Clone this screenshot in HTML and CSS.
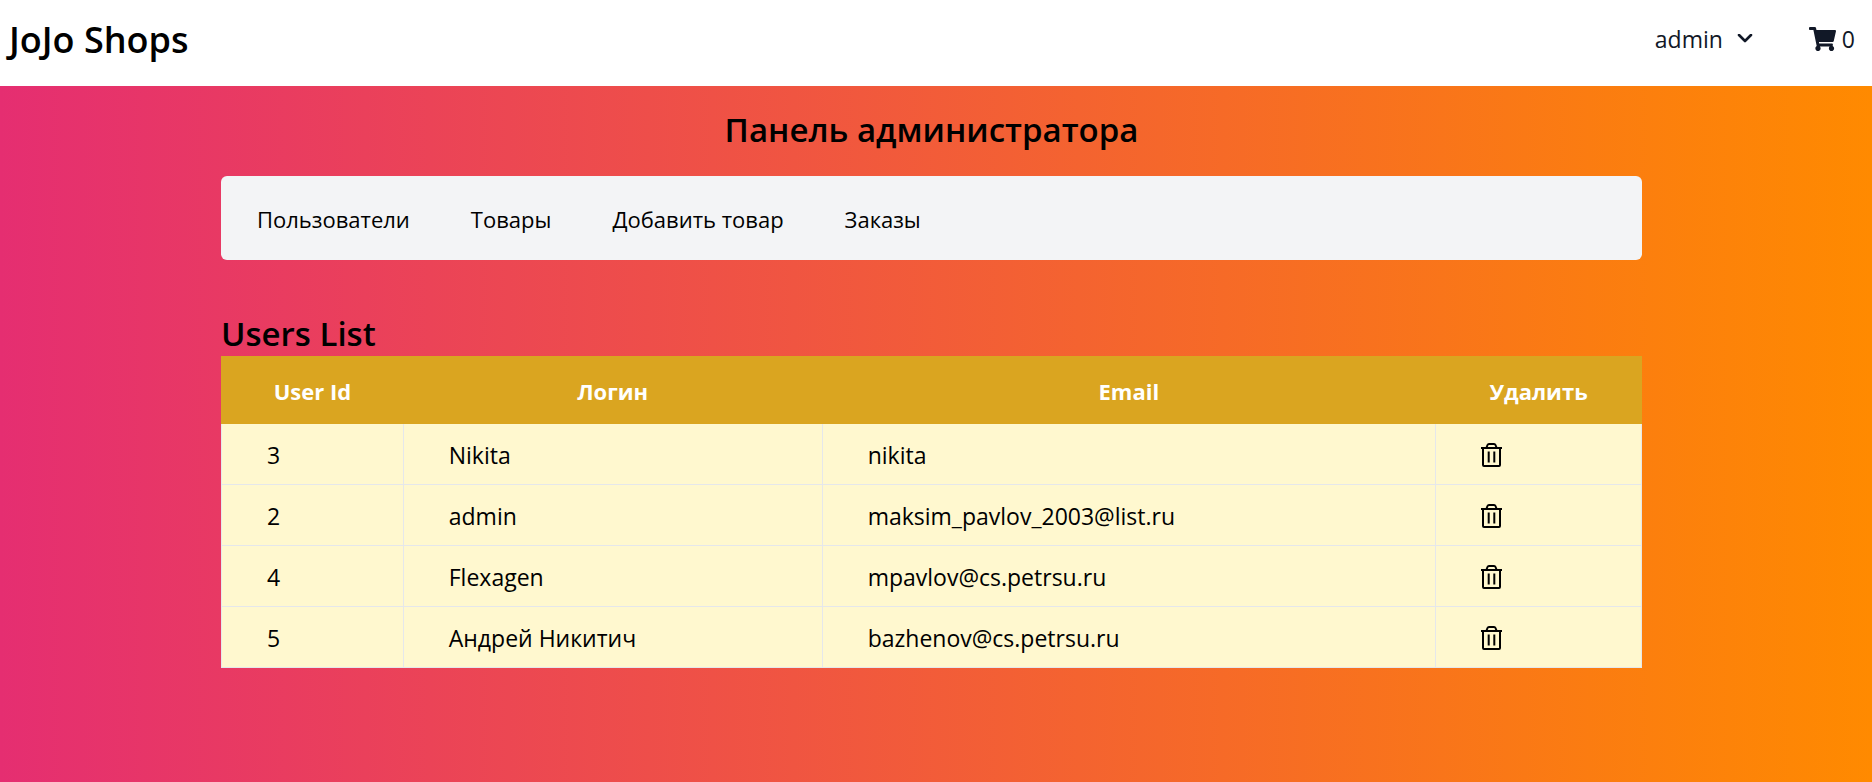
FILE: index.html
```html
<!DOCTYPE html>
<html lang="ru">
<head>
<meta charset="utf-8">
<meta name="viewport" content="width=device-width, initial-scale=1">
<title>JoJo Shops</title>
<link rel="stylesheet" href="styles.css">
</head>
<body>
<svg class="sprite" aria-hidden="true">
  <symbol id="trash" viewBox="0 0 21 24">
    <path d="M0 5h21M2 5.500V22q0 1 1 1h15q1 0 1-1V5.500M5.500 4.500l1-2.500q.4-1 1.500-1h5q1.100 0 1.500 1l1 2.500M7.700 8.500v11M13.300 8.500v11" fill="none" stroke="currentColor" stroke-width="2"/>
  </symbol>
</svg>
<header class="header">
  <a class="brand" href="#">JoJo Shops</a>
  <div class="actions">
    <button class="user" type="button">admin
      <svg class="chevron" viewBox="0 0 16 10" aria-hidden="true"><path d="M2 1l6 6 6-6" fill="none" stroke="currentColor" stroke-width="2.600" stroke-linecap="round" stroke-linejoin="round"/></svg>
    </button>
    <a class="cart" href="#" aria-label="Корзина">
      <svg class="cart-icon" viewBox="0 0 576 512" aria-hidden="true"><path fill="currentColor" d="M528.120 301.319l47.273-208C578.806 78.301 567.391 64 551.990 64H159.208l-9.166-44.810C147.758 8.021 137.930 0 126.529 0H24C10.745 0 0 10.745 0 24v16c0 13.255 10.745 24 24 24h69.883l70.248 343.435C147.325 417.100 136 435.222 136 456c0 30.928 25.072 56 56 56s56-25.072 56-56c0-15.674-6.447-29.835-16.824-40h209.647C430.447 426.165 424 440.326 424 456c0 30.928 25.072 56 56 56s56-25.072 56-56c0-22.172-12.888-41.332-31.579-50.405l5.517-24.276c3.413-15.018-8.002-29.319-23.403-29.319H218.117l-6.545-32h293.145c11.206 0 20.920-7.754 23.403-18.681z"/></svg>
      <span>0</span>
    </a>
  </div>
</header>
<main class="main">
  <div class="container">
    <h1 class="title">Панель администратора</h1>
    <nav class="tabs">
      <a href="#">Пользователи</a>
      <a href="#">Товары</a>
      <a href="#">Добавить товар</a>
      <a href="#">Заказы</a>
    </nav>
    <h2 class="subtitle">Users List</h2>
    <table class="users">
      <thead>
        <tr><th class="col-id">User Id</th><th class="col-login">Логин</th><th class="col-email">Email</th><th class="col-delete">Удалить</th></tr>
      </thead>
      <tbody>
        <tr><td>3</td><td>Nikita</td><td>nikita</td><td><button class="delete" type="button" aria-label="Удалить"><svg><use href="#trash"/></svg></button></td></tr>
        <tr><td>2</td><td>admin</td><td>maksim_pavlov_2003@list.ru</td><td><button class="delete" type="button" aria-label="Удалить"><svg><use href="#trash"/></svg></button></td></tr>
        <tr><td>4</td><td>Flexagen</td><td>mpavlov@cs.petrsu.ru</td><td><button class="delete" type="button" aria-label="Удалить"><svg><use href="#trash"/></svg></button></td></tr>
        <tr><td>5</td><td>Андрей Никитич</td><td>bazhenov@cs.petrsu.ru</td><td><button class="delete" type="button" aria-label="Удалить"><svg><use href="#trash"/></svg></button></td></tr>
      </tbody>
    </table>
  </div>
</main>
</body>
</html>
```
FILE: styles.css
```css
* { box-sizing: border-box; }
body {
  margin: 0;
  min-height: 100vh;
  display: flex;
  flex-direction: column;
  font-family: "Open Sans", "Noto Sans", sans-serif;
  font-size: 23px;
  line-height: 36px;
  color: #000;
}
a { color: inherit; text-decoration: none; }
button { font: inherit; color: inherit; background: none; border: 0; padding: 0; cursor: pointer; }
.sprite { position: absolute; width: 0; height: 0; }
.header {
  display: flex;
  align-items: center;
  justify-content: space-between;
  padding: 13px 17px 19px 9px;
  background: #fff;
}
.brand { font-size: 36px; line-height: 54px; font-weight: 600; }
.actions { display: flex; align-items: center; gap: 56px; padding-bottom: 2px; color: #111827; font-weight: 500; }
.user { display: flex; align-items: center; gap: 14px; }
.chevron { width: 16px; height: 10px; }
.cart { display: flex; align-items: center; gap: 6px; }
.cart-icon { width: 27px; height: 24px; }
.main {
  flex: 1;
  padding: 17px 9px 32px 0;
  background: linear-gradient(to right, #e52e71, #ff8a00);
}
.container { max-width: 1421px; margin: 0 auto; }
.title { margin: 0 0 19px; font-size: 33px; line-height: 54px; font-weight: 600; text-align: center; }
.tabs {
  display: flex;
  gap: 61px;
  padding: 25px 36px 23px;
  border-radius: 6px;
  background: #f3f4f6;
  font-size: 22px;
}
.subtitle { margin: 52px 0 0; font-size: 33px; line-height: 44px; font-weight: 600; }
.users { width: 100%; table-layout: fixed; border-collapse: collapse; }
.users th { padding: 16px 0 15px; border: 1px solid #daa520; border-bottom: 0; background: #daa520; color: #fff; font-size: 22px; font-weight: 700; }
.users td { padding: 13px 45px 11px; border: 1px solid #e5e7eb; background: #fff8cf; }
.users tbody tr:first-child td { border-top: 0; }
.col-id { width: 12.8%; }
.col-login { width: 29.5%; }
.col-email { width: 43.2%; }
.col-delete { width: 14.5%; }
.delete { display: flex; align-items: center; height: 36px; }
.delete svg { width: 21px; height: 24px; }
```
